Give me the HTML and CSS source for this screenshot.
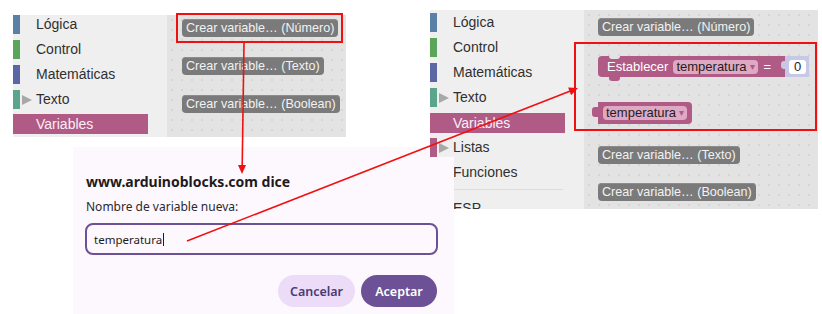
FILE: index.html
```html
<!DOCTYPE html>
<html lang="es">
<head>
<meta charset="utf-8">
<title>Crear variable</title>
<link rel="stylesheet" href="styles.css">
</head>
<body>
<div class="canvas">
  <section class="panel panel-left">
    <nav class="cats">
      <div class="cat"><span class="bar c-logic"></span><span class="tri"></span><span class="label">Lógica</span></div>
      <div class="cat"><span class="bar c-control"></span><span class="tri"></span><span class="label">Control</span></div>
      <div class="cat"><span class="bar c-math"></span><span class="tri"></span><span class="label">Matemáticas</span></div>
      <div class="cat"><span class="bar c-text"></span><span class="tri"><i class="arrow"></i></span><span class="label">Texto</span></div>
      <div class="cat selected"><span class="bar c-var"></span><span class="tri"></span><span class="label">Variables</span></div>
    </nav>
    <div class="flyout flyout-left">
      <div class="fbtn">Crear variable… (Número)</div>
      <div class="fbtn">Crear variable… (Texto)</div>
      <div class="fbtn">Crear variable… (Boolean)</div>
    </div>
  </section>

  <section class="panel panel-right">
    <nav class="cats">
      <div class="cat"><span class="bar c-logic"></span><span class="tri"></span><span class="label">Lógica</span></div>
      <div class="cat"><span class="bar c-control"></span><span class="tri"></span><span class="label">Control</span></div>
      <div class="cat"><span class="bar c-math"></span><span class="tri"></span><span class="label">Matemáticas</span></div>
      <div class="cat"><span class="bar c-text"></span><span class="tri"><i class="arrow"></i></span><span class="label">Texto</span></div>
      <div class="cat selected"><span class="bar c-var"></span><span class="tri"></span><span class="label">Variables</span></div>
      <div class="cat"><span class="bar c-list"></span><span class="tri"><i class="arrow"></i></span><span class="label">Listas</span></div>
      <div class="cat"><span class="bar c-func"></span><span class="tri"></span><span class="label">Funciones</span></div>
      <div class="sep"></div>
      <div class="cat"><span class="bar"></span><span class="tri"></span><span class="label">ESP</span></div>
    </nav>
    <div class="flyout flyout-right">
      <div class="fbtn">Crear variable… (Número)</div>
      <div class="set-block">
        <span class="btxt">Establecer</span>
        <span class="dd">temperatura<span class="caret">▾</span></span>
        <span class="btxt eq">=</span>
        <span class="num-block"><span class="num">0</span></span>
      </div>
      <div class="get-block">
        <span class="dd">temperatura<span class="caret">▾</span></span>
      </div>
      <div class="fbtn">Crear variable… (Texto)</div>
      <div class="fbtn">Crear variable… (Boolean)</div>
    </div>
  </section>

  <div class="dialog">
    <h1 class="d-title">www.arduinoblocks.com dice</h1>
    <p class="d-label">Nombre de variable nueva:</p>
    <div class="d-input"><span>temperatura</span><span class="cursor"></span></div>
    <div class="d-actions">
      <button class="d-btn cancel">Cancelar</button>
      <button class="d-btn ok">Aceptar</button>
    </div>
  </div>

  <svg class="annot" width="822" height="314" viewBox="0 0 822 314">
    <rect x="177" y="14" width="165" height="28" fill="none" stroke="#f01010" stroke-width="2"/>
    <rect x="575" y="43" width="241" height="87" fill="none" stroke="#f01010" stroke-width="2"/>
    <line x1="244" y1="43" x2="242.2" y2="167" stroke="#f01010" stroke-width="1.6"/>
    <polygon points="238,165 246,165 242,174" fill="#f01010"/>
    <line x1="187" y1="241" x2="571" y2="90.7" stroke="#f01010" stroke-width="1.6"/>
    <polygon points="578,88 571.1,95.2 568.1,87.4" fill="#f01010"/>
  </svg>
</div>
</body>
</html>
```

FILE: styles.css
```css
* { box-sizing: border-box; }
body {
  margin: 0;
  background: #ffffff;
}
.canvas {
  position: relative;
  width: 822px;
  height: 314px;
  overflow: hidden;
  background: #ffffff;
}

/* ---- Blockly panels ---- */
.panel {
  position: absolute;
  display: grid;
  grid-template-columns: 154px 1fr;
  background: #efefef;
  font-family: "Liberation Sans", Arial, sans-serif;
  overflow: hidden;
}
.panel-left { left: 13px; top: 15px; width: 333px; height: 122px; }
.panel-right { left: 430px; top: 10px; width: 388px; height: 199px; }

.cats {
  display: flex;
  flex-direction: column;
}
.panel-right .cats { padding-top: 3px; }
.cat {
  display: flex;
  align-items: center;
  height: 19px;
  margin-bottom: 6px;
  width: 135px;
  font-size: 14px;
  color: #2f2f2f;
}
.cat .bar { width: 7px; height: 100%; flex: none; }
.cat .tri { width: 16px; height: 100%; flex: none; display: flex; align-items: center; }
.cat .arrow {
  display: block;
  margin-left: 2px;
  width: 0; height: 0;
  border-top: 5.5px solid transparent;
  border-bottom: 5.5px solid transparent;
  border-left: 10px solid #a8a8a8;
}
.cat .label { white-space: nowrap; line-height: 19px; }
.cat.selected { background: #b05a86; color: #fbeef4; height: 20px; margin-bottom: 5px; }
.panel-left .cat.selected { margin-top: -1px; }
.c-logic { background: #5b80a5; }
.c-control { background: #5ba55b; }
.c-math { background: #5b67a5; }
.c-text { background: #5ba58c; }
.c-var { background: #b05a86; }
.c-list { background: #b05a86; }
.c-func { background: #995ba5; }
.sep {
  height: 1px;
  margin: 1px 0 9px 23px;
  width: 110px;
  background: #dcdcdc;
}

.flyout {
  display: flex;
  flex-direction: column;
  align-items: flex-start;
  background-color: #e3e3e3;
  background-image: radial-gradient(circle, #d6d6d6 0.7px, transparent 1.1px);
  background-size: 10px 10px;
}
.flyout-left { padding: 4px 0 0 15px; gap: 20px; }
.flyout-right { padding: 8px 0 0 14px; }

.fbtn {
  height: 18px;
  line-height: 18px;
  padding: 0 4px;
  border-radius: 4px;
  background: #7a7a7a;
  box-shadow: inset 0 1px 0 #8c8c8c;
  color: #f2f2f2;
  font-size: 12.6px;
  white-space: nowrap;
}

/* ---- blocks ---- */
.set-block {
  position: relative;
  margin-top: 20px;
  display: flex;
  align-items: center;
  height: 21px;
  padding-left: 9px;
  background: #b05a86;
  border-radius: 4px 0 0 4px;
  color: #ffffff;
  font-size: 13px;
}
.set-block::before {
  content: "";
  position: absolute;
  left: 11px; top: 0;
  width: 11px; height: 3px;
  background: #e3e3e3;
  border-radius: 0 0 3px 3px;
}
.set-block::after {
  content: "";
  position: absolute;
  left: 11px; bottom: -4px;
  width: 11px; height: 4px;
  background: #b05a86;
  border-radius: 0 0 3px 3px;
}
.btxt { line-height: 21px; white-space: nowrap; }
.eq { margin-left: 6px; }
.dd {
  display: flex;
  align-items: center;
  height: 14px;
  margin-left: 5px;
  padding: 0 3px 0 3px;
  border-radius: 4px;
  background: #dfa9c4;
  color: #1e1e1e;
  font-size: 13px;
  line-height: 14px;
  white-space: nowrap;
}
.caret { color: #b05a86; font-size: 10px; margin-left: 3px; }
.num-block {
  position: relative;
  margin-left: 14px;
  display: flex;
  align-items: center;
  height: 21px;
  padding: 0 3px 0 4px;
  background: #c7c7e6;
}
.num-block::before {
  content: "";
  position: absolute;
  left: -4px; top: 5px;
  width: 4px; height: 8px;
  background: #c7c7e6;
  border-radius: 3px 0 0 3px;
}
.num {
  display: block;
  width: 17px;
  height: 14px;
  line-height: 14px;
  text-align: center;
  border-radius: 3px;
  background: #ffffff;
  color: #1e1e1e;
  font-size: 13px;
}
.get-block {
  position: relative;
  margin-top: 25px;
  display: flex;
  align-items: center;
  height: 22px;
  padding-right: 5px;
  background: #b05a86;
  border-radius: 0 4px 4px 0;
}
.get-block::before {
  content: "";
  position: absolute;
  left: -6px; top: 5px;
  width: 6px; height: 10px;
  background: #b05a86;
  border-radius: 3px 0 0 3px;
}
.get-block .dd { margin-left: 5px; }
.flyout-right .get-block + .fbtn { margin-top: 22px; }
.flyout-right .fbtn:last-child { margin-top: 19px; }

/* ---- dialog ---- */
.dialog {
  position: absolute;
  left: 73px;
  top: 147px;
  width: 381px;
  height: 167px;
  padding: 25px 16px 0 12px;
  background: #fdf8fd;
  clip-path: polygon(0 0, 357px 0, 357px 10px, 100% 10px, 100% 100%, 0 100%);
  font-family: "Noto Sans", "Open Sans", sans-serif;
  color: #1d1b20;
  display: flex;
  flex-direction: column;
}
.d-title {
  margin: 0 0 0 1px;
  font-size: 14px;
  font-weight: 700;
  line-height: 20px;
  color: #1d1b20;
}
.d-label {
  margin: 7px 0 0 1px;
  font-size: 12px;
  line-height: 16px;
  color: #2b2930;
}
.d-input {
  margin-top: 8px;
  height: 32px;
  border: 2px solid #6c5196;
  border-radius: 8px;
  display: flex;
  align-items: center;
  padding-left: 7px;
  font-size: 11.5px;
  color: #1d1b20;
}
.cursor { width: 1px; height: 13px; background: #1d1b20; margin-left: 1px; }
.d-actions {
  margin-top: 20px;
  display: flex;
  justify-content: flex-end;
  gap: 6px;
  padding-right: 1px;
}
.d-btn {
  height: 32px;
  border: none;
  border-radius: 16px;
  font-family: "Noto Sans", "Open Sans", sans-serif;
  font-size: 12.5px;
  font-weight: 600;
  padding: 0;
}
.cancel { width: 77px; background: #ecdcf8; color: #4a3a70; }
.ok { width: 76px; background: #6c5196; color: #ffffff; }

.annot {
  position: absolute;
  left: 0; top: 0;
  pointer-events: none;
}
```
